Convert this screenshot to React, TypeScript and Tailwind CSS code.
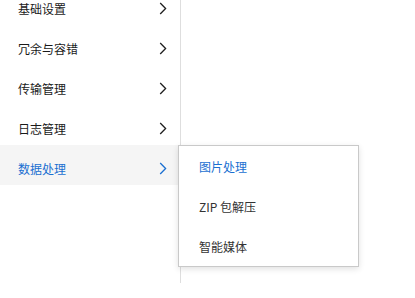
import React from "react";

const Chevron = ({ active }: { active?: boolean }) => (
  <svg width="8" height="13" viewBox="0 0 8 13" className="shrink-0">
    <path
      d="M1.2 1 L6.6 6.5 L1.2 12"
      fill="none"
      stroke={active ? "#1a6fd1" : "#1f1f1f"}
      strokeWidth="1.3"
    />
  </svg>
);

const items = ["基础设置", "冗余与容错", "传输管理", "日志管理", "数据处理"];
const sub = ["图片处理", "ZIP 包解压", "智能媒体"];

export default function App() {
  return (
    <div
      className="relative w-[415px] h-[298px] overflow-hidden bg-white"
      style={{ fontFamily: '"Noto Sans CJK SC", "Noto Sans", sans-serif' }}
    >
      <div className="w-[181px] h-full border-r border-[#dedede] mt-[-15px]">
        {items.map((t, i) => {
          const active = i === 4;
          return (
            <div
              key={t}
              className={`h-10 flex items-center justify-between pl-[18px] pr-[13px] pt-[7px] text-[12px] ${
                active ? "bg-[#f5f5f5] text-[#1a6fd1]" : "text-[#1a1a1a]"
              }`}
            >
              <span>{t}</span>
              <Chevron active={active} />
            </div>
          );
        })}
      </div>
      <div className="absolute left-[178px] top-[145px] w-[181px] border border-[#c9c9c9] bg-white shadow-[0_2px_6px_rgba(0,0,0,0.12)]">
        {sub.map((t, i) => (
          <div
            key={t}
            className={`h-10 flex items-center pl-[20px] pt-[1px] text-[12px] ${
              i === 0 ? "text-[#1a6fd1]" : "text-[#333333]"
            }`}
          >
            {t}
          </div>
        ))}
      </div>
    </div>
  );
}
